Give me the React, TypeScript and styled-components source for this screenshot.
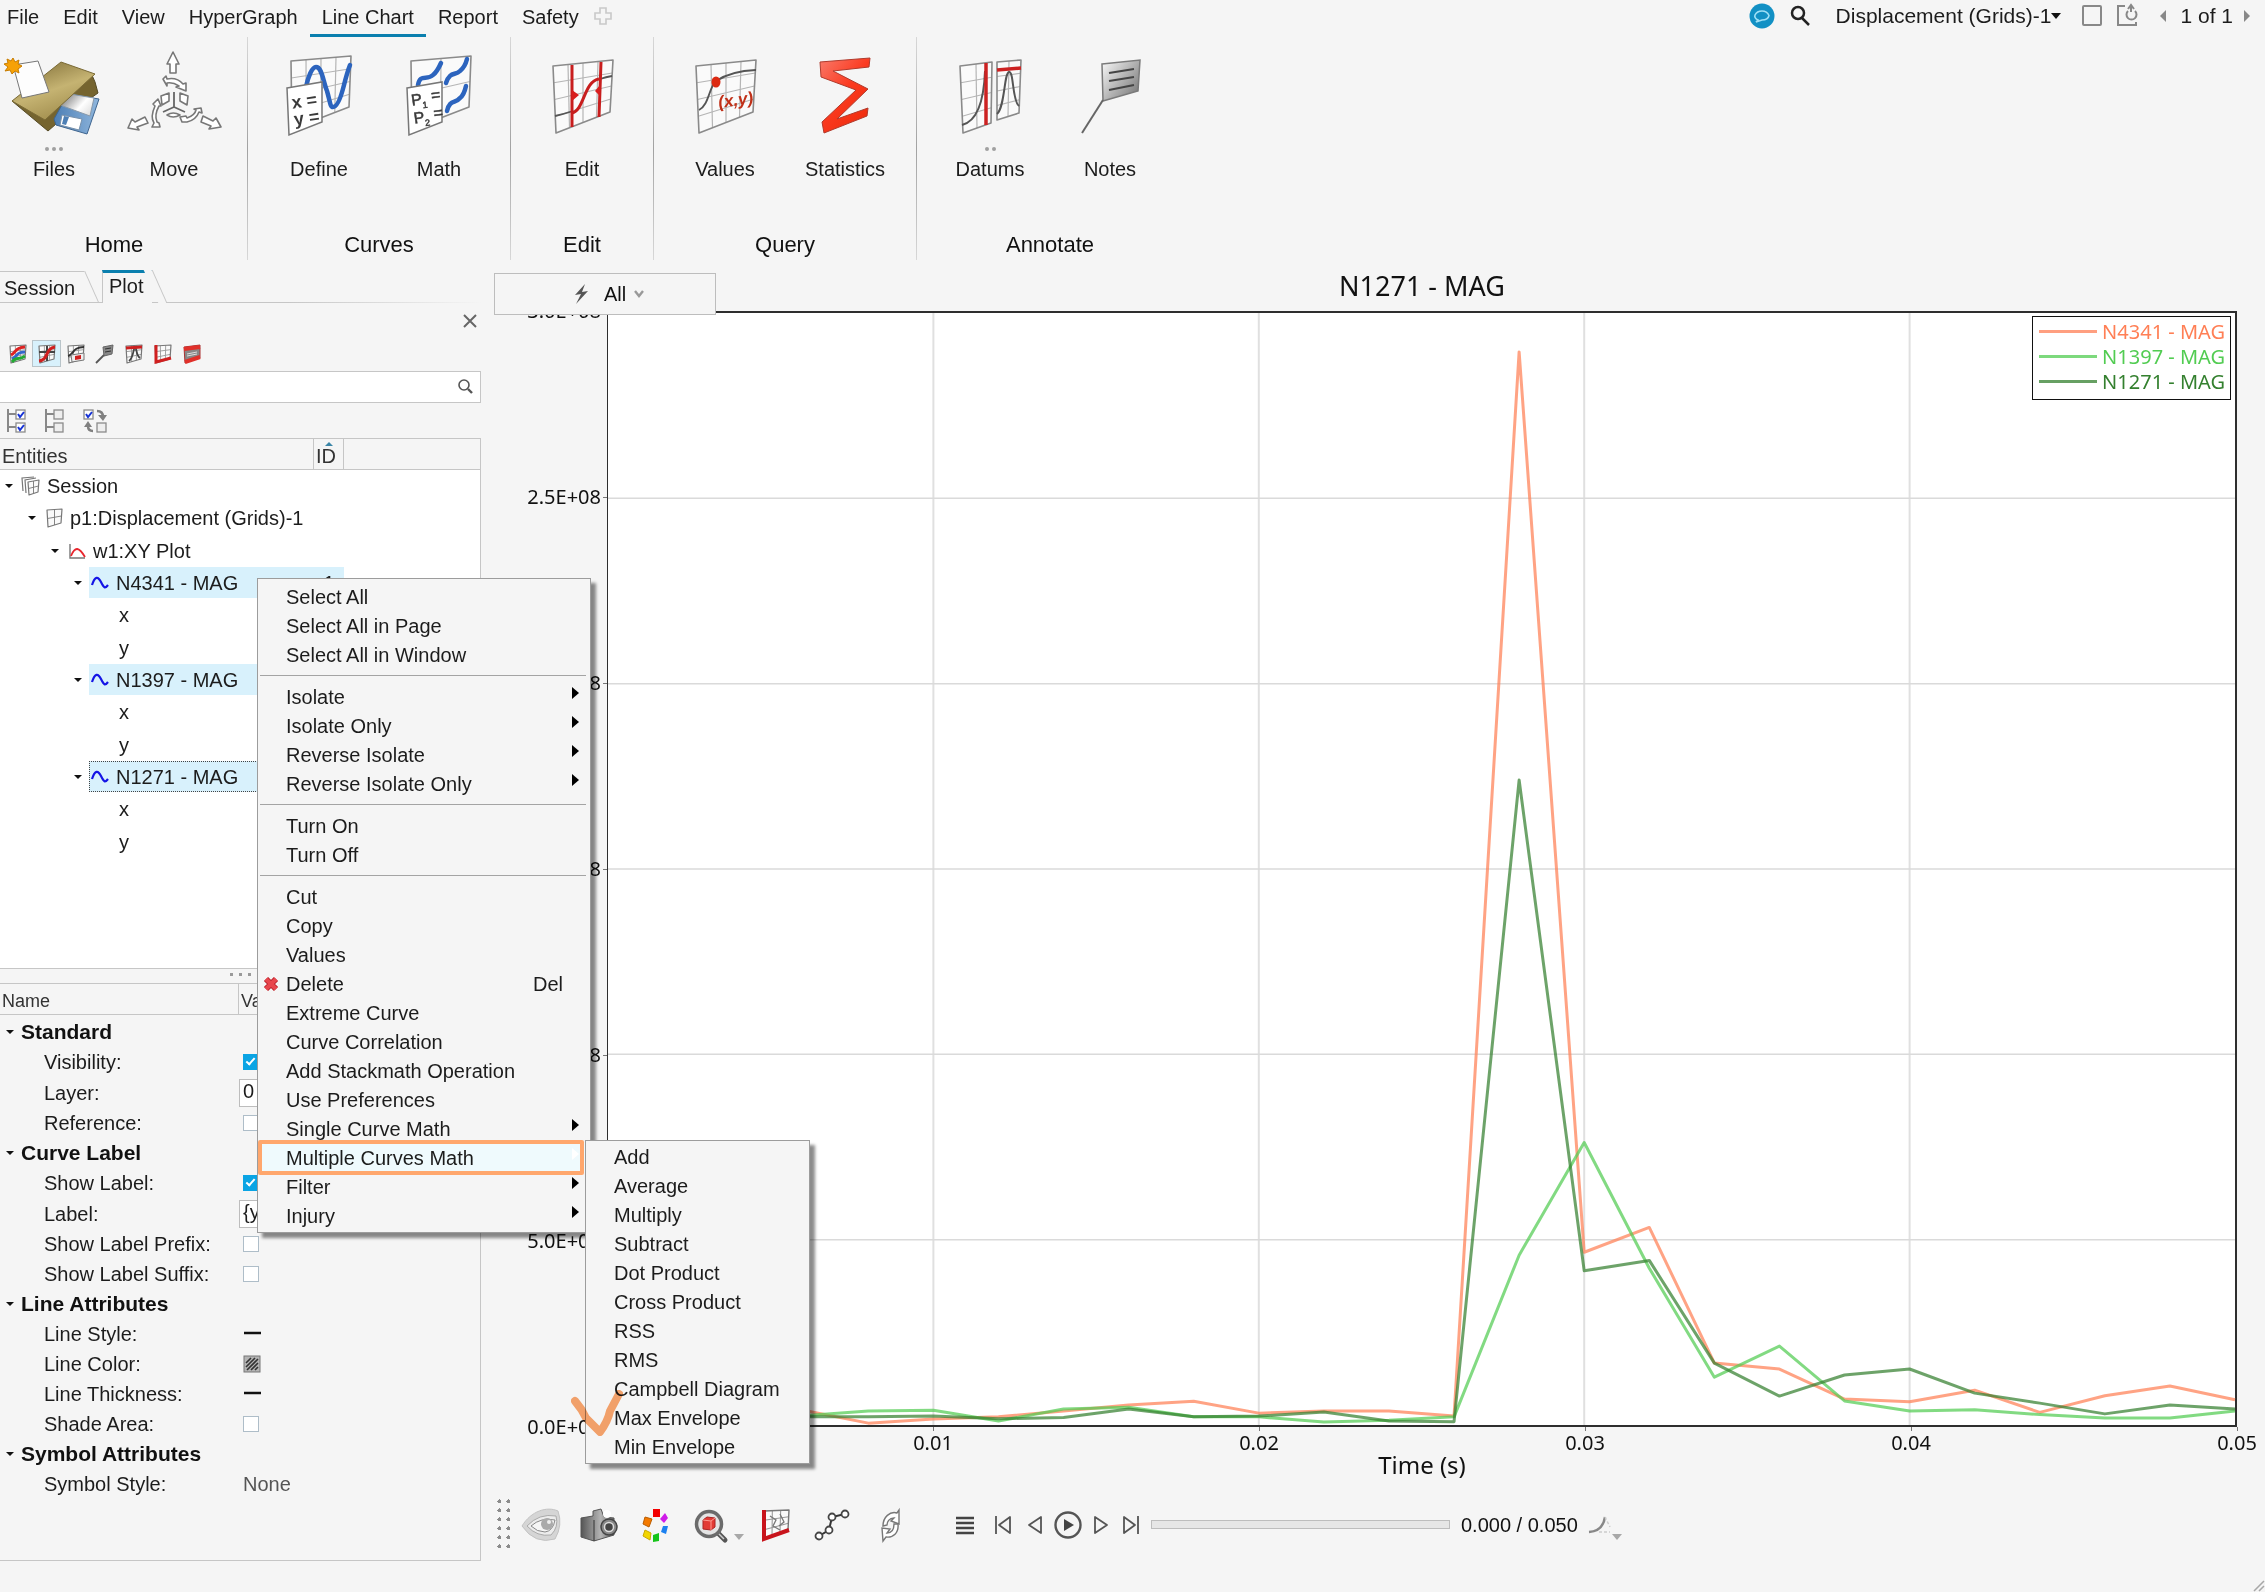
import React from "react";
import styled, { createGlobalStyle, css } from "styled-components";

/* ---------- theme values ---------- */

const ui = '"Liberation Sans", Arial, sans-serif';
const plotFont = '"Noto Sans", "Open Sans", sans-serif';
const bg = "#f5f5f5";
const line = "#c6c6c6";
const accent = "#0a7fae";
const picked = "#d8f1fc";

const GlobalStyle = createGlobalStyle`
  *, *::before, *::after { box-sizing: border-box; }
  body { margin: 0; background: ${bg}; color: #1c1c1c; font: 20px/24px ${ui}; }
  button, input { font: inherit; color: inherit; margin: 0; padding: 0; border: 0; background: none; border-radius: 0; }
  button { cursor: pointer; }
  svg { display: block; overflow: visible; flex: none; }
`;

/* ---------- drawing helpers ---------- */

type Pt = [number, number];
type Quad = [Pt, Pt, Pt, Pt];

const mix = (a: Pt, b: Pt, t: number): Pt => [a[0] + (b[0] - a[0]) * t, a[1] + (b[1] - a[1]) * t];
const pts = (list: Pt[]) => list.map((p) => p.join(",")).join(" ");

/* A sheet of squared paper in perspective; corners run clockwise from the top left. */
function Mesh({ q, n = 4, m = 4, fill = "#fafafa", stroke = "#8a8a8a", w = 1.6, inner = "#b5b5b5" }: {
  q: Quad; n?: number; m?: number; fill?: string; stroke?: string; w?: number; inner?: string;
}) {
  const out: React.ReactNode[] = [];
  for (let i = 1; i < n; i++) {
    const a = mix(q[0], q[1], i / n);
    const b = mix(q[3], q[2], i / n);
    out.push(<line key={"c" + i} x1={a[0]} y1={a[1]} x2={b[0]} y2={b[1]} stroke={inner} strokeWidth={w * 0.75} />);
  }
  for (let i = 1; i < m; i++) {
    const a = mix(q[0], q[3], i / m);
    const b = mix(q[1], q[2], i / m);
    out.push(<line key={"r" + i} x1={a[0]} y1={a[1]} x2={b[0]} y2={b[1]} stroke={inner} strokeWidth={w * 0.75} />);
  }
  return (
    <g>
      <polygon points={pts(q)} fill={fill} />
      {out}
      <polygon points={pts(q)} fill="none" stroke={stroke} strokeWidth={w} strokeLinejoin="round" />
    </g>
  );
}

const Big = ({ children }: { children: React.ReactNode }) => (
  <svg width="100" height="80" viewBox="0 0 100 80" fill="none" aria-hidden="true">{children}</svg>
);
const Small = ({ children, w = 20, h = 20 }: { children: React.ReactNode; w?: number; h?: number }) => (
  <svg width={w} height={h} viewBox={`0 0 ${w} ${h}`} fill="none" aria-hidden="true">{children}</svg>
);

/* ---------- ribbon icons ---------- */

const FilesIcon = () => (
  <Big>
    <defs>
      <linearGradient id="fold" x1="0.2" y1="0" x2="0.7" y2="1">
        <stop offset="0" stopColor="#83713a" /><stop offset="0.5" stopColor="#c5b372" /><stop offset="1" stopColor="#9c8848" />
      </linearGradient>
      <linearGradient id="disk" x1="0" y1="0" x2="1" y2="0">
        <stop offset="0" stopColor="#4d7fb5" /><stop offset="1" stopColor="#8fb6dd" />
      </linearGradient>
      <linearGradient id="shut" x1="0" y1="0.2" x2="1" y2="0.8">
        <stop offset="0" stopColor="#777" /><stop offset="0.6" stopColor="#fff" /><stop offset="1" stopColor="#ddd" />
      </linearGradient>
    </defs>
    <path d="M8 46 44 76 60 62 94 38 91 27 87 18Z" fill="#75642f" stroke="#554a24" />
    <path d="M50 64 64 39 95 44 83 79 52 70Z" fill="url(#disk)" stroke="#3f658f" strokeLinejoin="round" />
    <path d="M66 39 90 43 86 61 56 50Z" fill="url(#shut)" stroke="#8899aa" />
    <path d="M58 60 78 64 75 75 56 70Z" fill="#fff" stroke="#7790aa" />
    <path d="M60 61 65 62 62 70 58 69Z" fill="#4d7fb5" />
    <path d="M8 46 57 7 91 19 41 65Z" fill="url(#fold)" stroke="#7a6a35" strokeLinejoin="round" />
    <path d="M9 10 34 6 45 37 18 43Z" fill="#fdfdfd" stroke="#777" strokeLinejoin="round" />
    <path d="M9 3 11 7 15 5 14 9 18 11 14 14 15 18 11 16 8 19 6 15 1 16 4 12 0 9 4 8 3 4 7 6Z" fill="#f6a106" stroke="#c77c00" />
  </Big>
);

const MoveIcon = () => (
  <Big>
    <g fill="#fff" stroke="#777" strokeWidth="1.6" strokeLinejoin="round">
      <path d="M49-3 55 9H52V18H46V9H43Z" />
      <path d="M39 24 42 21 43 24Q53 22 59 29L62 28 62 36 52 32 55 31Q49 27 43 28L43 31Z" />
      <path d="M37 41 45 38 45 46 38 50ZM56 38 64 41 63 50 56 46Z" />
      <path d="M43 60Q49 56 56 60 49 64 43 60Z" />
      <path d="M4 73 8 64 11 67 21 62 24 68 13 72 15 75Z" />
      <path d="M97 72 92 63 89 66 79 61 77 67 87 71 85 74Z" />
      <path d="M34 44 29 49 31 51Q26 62 30 68L28 72 36 72 35 68 33 67Q30 60 35 51L37 51Z" />
      <path d="M56 62 62 61 63 63Q71 60 72 55L70 54 77 53 78 58 75 57Q72 65 63 67L58 67Z" />
    </g>
    <path d="M50 37V52L39 57M50 52 61 57" stroke="#666" strokeWidth="1.8" />
  </Big>
);

const cardText = { fontFamily: ui, fontWeight: 700, fill: "#3a3a3a" } as const;

const DefineIcon = () => (
  <Big>
    <Mesh q={[[22, 6], [82, 1], [80, 52], [23, 74]]} />
    <path d="M37 32C39 22 43 12 47 12C53 12 54 26 58 36C61 46 61 52 64 52C69 52 73 38 75 30Q78 18 81 10" stroke="#2c64be" strokeWidth="4.5" strokeLinecap="round" />
    <path d="M18 33 53 27 53 67 20 80Z" fill="#fff" stroke="#777" strokeWidth="1.5" />
    <g transform="rotate(-8 36 50)" fontSize="18" {...cardText}>
      <text x="23" y="52">x =</text>
      <text x="23" y="69">y =</text>
    </g>
  </Big>
);

const MathIcon = () => (
  <Big>
    <Mesh q={[[22, 6], [82, 1], [80, 52], [23, 74]]} n={2} m={2} />
    <g stroke="#2c64be" strokeWidth="4.5" strokeLinecap="round">
      <path d="M29 30C31 18 38 26 44 20Q48 17 52 8" />
      <path d="M57 28C61 16 66 21 71 16Q76 12 78 4" />
      <path d="M58 56C61 44 66 49 71 43Q75 40 77 31" />
    </g>
    <path d="M18 33 53 27 53 67 20 80Z" fill="#fff" stroke="#777" strokeWidth="1.5" />
    <g transform="rotate(-8 36 50)" {...cardText} fontWeight={400} stroke="#3a3a3a" strokeWidth="0.5">
      <text x="23" y="49" fontSize="16">P<tspan fontSize="9" dy="4">1</tspan><tspan dy="-6"> =</tspan></text>
      <text x="23" y="67" fontSize="16">P<tspan fontSize="9" dy="4">2</tspan><tspan dy="-6"> =</tspan></text>
    </g>
  </Big>
);

const sheet: Quad = [[21, 11], [81, 5], [78, 57], [24, 78]];

const EditIcon = () => (
  <Big>
    <Mesh q={sheet} />
    <path d="M23 61Q32 59 41 56M68 24Q74 22 80 21" stroke="#555" strokeWidth="1.8" />
    <path d="M40 58C52 56 52 26 67 24" stroke="#c81e1e" strokeWidth="3" />
    <path d="M40 10V72M69 7 67 62" stroke="#c81e1e" strokeWidth="3" />
    <path d="M40 35 47 40 40 46ZM68 30 63 36 68 41Z" fill="#d81e1e" />
  </Big>
);

const ValuesIcon = () => (
  <Big>
    <Mesh q={sheet} />
    <path d="M24 55C34 50 34 32 41 26Q56 16 81 15" stroke="#555" strokeWidth="1.8" />
    <ellipse cx="41" cy="27" rx="4.5" ry="5.5" fill="#dc2a12" />
    <text x="43" y="51" fontFamily={ui} fontStyle="italic" fontWeight="700" fontSize="17" fill="#c03018" transform="rotate(-8 58 44)">(x,y)</text>
  </Big>
);

const SigmaIcon = () => (
  <Big>
    <defs>
      <linearGradient id="sig" x1="0" y1="0" x2="0.8" y2="1">
        <stop offset="0" stopColor="#f97a6a" /><stop offset="0.5" stopColor="#fb3a20" /><stop offset="1" stopColor="#ee2c0c" />
      </linearGradient>
    </defs>
    <path d="M25 7 75 3 74 12 38 16 73 34 42 64 73 53 72 61 29 78 27 67 61 35 26 22Z" fill="url(#sig)" stroke="#b03a2c" strokeLinejoin="round" />
  </Big>
);

const DatumsIcon = () => (
  <Big>
    <Mesh q={[[20, 11], [52, 7], [51, 68], [23, 78]]} n={2} />
    <Mesh q={[[57, 7], [81, 5], [79, 58], [57, 65]]} n={2} />
    <path d="M22 70C38 66 44 44 45 16M57 59C65 52 64 18 69 17S72 46 79 51" stroke="#555" strokeWidth="2" />
    <path d="M46 8V70" stroke="#cc2222" strokeWidth="3.5" />
    <path d="M57 15 81 13" stroke="#cc2222" strokeWidth="3.5" />
  </Big>
);

const NotesIcon = () => (
  <Big>
    <defs>
      <linearGradient id="flag" x1="0" y1="0" x2="1" y2="0.8">
        <stop offset="0" stopColor="#fafafa" /><stop offset="1" stopColor="#7a7a7a" />
      </linearGradient>
    </defs>
    <path d="M42 9 80 5 78 36 43 46Z" fill="url(#flag)" stroke="#7a7a7a" strokeWidth="1.5" />
    <path d="M49 18 74 14M49 26 74 22M49 35 74 30" stroke="#444" strokeWidth="2" />
    <path d="M43 45 22 78" stroke="#666" strokeWidth="2" />
  </Big>
);

/* ---------- small icons ---------- */

const tiny: Quad = [[2, 2], [18, 1], [17, 15], [3, 19]];
const TinyMesh = () => <Mesh q={tiny} n={3} m={3} w={1.2} stroke="#777" inner="#999" />;

const filterIcons: { name: string; art: React.ReactNode }[] = [
  { name: "Curves", art: <><TinyMesh /><path d="M3 11C9 8 6 4 17 3" stroke="#d22" strokeWidth="3" /><path d="M4 15C10 12 8 8 17 8" stroke="#36c" strokeWidth="3" /><path d="M4 18C9 12 10 17 17 12" stroke="#2a3" strokeWidth="3" /></> },
  { name: "Plot curve", art: <><TinyMesh /><path d="M2 8H18M10 2V17" stroke="#444" strokeWidth="2" /><path d="M2 17C12 16 8 4 18 3" stroke="#d01f1f" strokeWidth="3" /></> },
  { name: "Data sources", art: <><TinyMesh /><path d="M2 12C8 11 6 3 18 3" stroke="#333" strokeWidth="2" /><path d="M5 11 18 9V16L6 18Z" fill="#eee" stroke="#777" /><path d="M9 12 15 11V15L9 16Z" fill="#d01f1f" /></> },
  { name: "Notes", art: <><path d="M8 3 18 1 17 10 9 12Z" fill="#888" stroke="#666" /><path d="M10 5 16 4M10 8 16 7" stroke="#333" /><path d="M9 11 1 19" stroke="#555" strokeWidth="1.8" /></> },
  { name: "Datums", art: <><TinyMesh /><path d="M5 17C10 13 9 4 11 4S12 12 16 14" stroke="#444" strokeWidth="1.8" /><path d="M2 4 18 3" stroke="#cc2020" strokeWidth="2.8" /></> },
  { name: "Axes", art: <><TinyMesh /><path d="M3 1V18L18 14" stroke="#d01f1f" strokeWidth="3" /></> },
  { name: "Header and footer", art: <><path d="M2 3 18 1V14L3 19Z" fill="#888" stroke="#a33" /><path d="M2 5 18 3M3 18 18 13" stroke="#e0302a" strokeWidth="4" /><path d="M5 10 15 8M5 12 15 10" stroke="#ddd" /></> },
];

const MiniBox = ({ x, y, on }: { x: number; y: number; on?: boolean }) => (
  <g>
    <rect x={x} y={y} width="9" height="9" fill={on ? "#fff" : "#eee"} stroke="#8b8b8b" strokeWidth="1.3" />
    {on && <path d={`M${x + 2} ${y + 4}l2 3 4-5`} stroke="#1733d6" strokeWidth="2" />}
  </g>
);
const CheckAllIcon = ({ on }: { on?: boolean }) => (
  <Small w={20} h={24}>
    <path d="M1 0V23M1 5H9M1 18H9" stroke="#888" strokeWidth="2" />
    <MiniBox x={9} y={1} on={on} /><MiniBox x={9} y={14} on={on} />
  </Small>
);
const InvertIcon = () => (
  <Small w={24} h={24}>
    <MiniBox x={1} y={1} on /><MiniBox x={14} y={14} />
    <path d="M14 2Q20 2 20 8M10 22Q5 22 5 17" stroke="#808080" strokeWidth="2.5" />
    <path d="M15 6H24L20 12ZM1 18H9L5 12Z" fill="#808080" />
  </Small>
);

const SessionIcon = () => (
  <Small>
    <path d="M3 15 2 2 14 1M6 17 5 4 16 2" stroke="#777" strokeWidth="1.2" />
    <Mesh q={[[8, 6], [19, 4], [18, 16], [9, 19]]} n={2} m={2} w={1.2} stroke="#777" inner="#777" />
  </Small>
);
const PageIcon = () => <Small><Mesh q={[[4, 2], [19, 1], [18, 15], [5, 19]]} n={2} m={2} w={1.2} stroke="#777" inner="#777" /></Small>;
const WindowIcon = () => (
  <Small><path d="M4 3V17H19" stroke="#777" strokeWidth="1.4" /><path d="M5 15C9 5 13 6 19 16" stroke="#e8262e" strokeWidth="1.8" /></Small>
);
const CurveIcon = () => <Small><path d="M3 12C6 3 9 3 12 9S16 16 19 12" stroke="#1414e6" strokeWidth="2.2" /></Small>;

const SearchIcon = ({ color = "#222", w = 2.5 }: { color?: string; w?: number }) => (
  <Small w={22} h={22}><circle cx="9" cy="8" r="6" stroke={color} strokeWidth={w} /><path d="M13 13 20 20" stroke={color} strokeWidth={w} /></Small>
);

/* ---------- page frame ---------- */

const Page = styled.div`
  position: relative;
  min-height: 100vh;
  display: flex;
  flex-direction: column;
  overflow: hidden;
`;

const MenuBar = styled.header`
  display: flex;
  align-items: flex-start;
  justify-content: space-between;
  height: 37px;
`;
const MenuNav = styled.nav`
  display: flex;
  align-items: flex-start;
`;
const MenuButton = styled.button<{ $current?: boolean }>`
  height: 37px;
  padding: 5px 12px 5px;
  line-height: 24px;
  border-bottom: 3px solid ${(p) => (p.$current ? accent : "transparent")};
  &:first-child { padding-left: 7px; }
`;
const IconButton = styled.button<{ $w?: number; $h?: number }>`
  display: flex;
  align-items: center;
  justify-content: center;
  flex: none;
  width: ${(p) => p.$w ?? 28}px;
  height: ${(p) => p.$h ?? 32}px;
`;
const PageTools = styled.div`
  display: flex;
  align-items: center;
  height: 32px;
  padding-right: 4px;
  font-size: 21px;
`;
const PageName = styled.button`
  display: flex;
  align-items: center;
  margin: 0 13px 0 17px;
`;

/* ---------- ribbon ---------- */

const Ribbon = styled.section`
  display: flex;
  height: 223px;
`;
const Group = styled.div`
  display: flex;
  flex-direction: column;
  justify-content: space-between;
  box-sizing: content-box;
  padding: 18px 11px 3px;
  border-right: 1px solid #b4b4b4;
  border-image: linear-gradient(#d8d8d8, #a2a2a2 50%, #d8d8d8) 1;
  &:first-child { margin-left: -17px; padding-right: 13px; }
  &:last-child { border-right: 0; padding-left: 13px; }
`;
const GroupTools = styled.div`
  display: flex;
`;
const GroupName = styled.h2`
  margin: 0;
  text-align: center;
  font-size: 22px;
  line-height: 24px;
  font-weight: 400;
  color: #111;
`;
const Tool = styled.button`
  width: 120px;
  display: flex;
  flex-direction: column;
  align-items: center;
`;
const Dots = styled.span`
  display: flex;
  gap: 3px;
  align-items: center;
  height: 22px;
  padding-top: 6px;
  i { width: 4px; height: 4px; border-radius: 2px; background: #a0a0a0; }
`;

const groups = [
  { name: "Home", tools: [["Files", FilesIcon, 3], ["Move", MoveIcon, 0]] },
  { name: "Curves", tools: [["Define", DefineIcon, 0], ["Math", MathIcon, 0]] },
  { name: "Edit", tools: [["Edit", EditIcon, 0]] },
  { name: "Query", tools: [["Values", ValuesIcon, 0], ["Statistics", SigmaIcon, 0]] },
  { name: "Annotate", tools: [["Datums", DatumsIcon, 2], ["Notes", NotesIcon, 0]] },
] as { name: string; tools: [string, React.FC, number][] }[];

/* ---------- side panel ---------- */

const Main = styled.main`
  flex: 1;
  display: grid;
  grid-template-columns: 481px minmax(0, 1fr);
`;
const Side = styled.aside`
  display: flex;
  flex-direction: column;
  min-width: 0;
  padding-top: 10px;
`;
const Tabs = styled.div`
  display: flex;
  height: 33px;
  border-bottom: 1px solid ${line};
  border-image: linear-gradient(90deg, ${line} 60%, transparent) 1;
`;
const Tab = styled.button<{ $on?: boolean }>`
  position: relative;
  display: flex;
  justify-content: flex-start;
  align-items: center;
  width: ${(p) => (p.$on ? 50 : 84)}px;
  margin-right: 18px;
  margin-bottom: -1px;
  padding: ${(p) => (p.$on ? "0 0 4px 6px" : "1px 0 0 4px")};
  border-top: ${(p) => (p.$on ? `3px solid ${accent}` : `1px solid ${line}`)};
  border-left: ${(p) => (p.$on ? `1px solid ${line}` : 0)};
  background: ${bg};
  ${(p) => !p.$on && css`margin-top: 1px; border-bottom: 1px solid ${line};`}
  &::after {
    content: "";
    position: absolute;
    top: ${(p) => (p.$on ? "-3px" : "-1px")};
    bottom: 0;
    right: -8px;
    width: 16px;
    border-right: 1px solid ${line};
    transform: skewX(24deg);
    background: linear-gradient(${bg}, ${bg}) right bottom / 8px ${(p) => (p.$on ? "100%" : "0")} no-repeat;
  }
`;
const CloseRow = styled.div`
  display: flex;
  justify-content: flex-end;
  height: 37px;
`;
const FilterBar = styled.div`
  display: flex;
  height: 31px;
  padding-left: 3px;
`;
const FilterButton = styled.button<{ $on?: boolean }>`
  display: flex;
  align-items: center;
  justify-content: center;
  width: 29px;
  height: 27px;
  border: 1px solid ${(p) => (p.$on ? "#b9c4c9" : "transparent")};
  background: ${(p) => (p.$on ? picked : "none")};
`;
const SearchBox = styled.label`
  display: flex;
  align-items: center;
  height: 32px;
  padding-right: 5px;
  border: 1px solid ${line};
  border-left: 0;
  background: #fff;
  input { flex: 1; min-width: 0; height: 28px; padding-left: 4px; outline: none; }
`;
const CheckBar = styled.div`
  display: flex;
  align-items: center;
  gap: 18px;
  height: 35px;
  padding-left: 7px;
`;
const Framed = styled.div`
  border-right: 1px solid ${line};
`;
const TreeFrame = styled(Framed)`
  height: 531px;
  border-top: 1px solid ${line};
  border-bottom: 1px solid ${line};
  background: #fff;
`;
const Table = styled.table`
  width: 100%;
  table-layout: fixed;
  border-spacing: 0;
  td, th { padding: 0; text-align: left; font-weight: 400; white-space: nowrap; }
`;
const HeadCell = styled.th<{ $h: number; $size?: number }>`
  position: relative;
  height: ${(p) => p.$h}px;
  background: ${bg};
  border-bottom: 1px solid ${line};
  border-right: 1px solid ${line};
  font-size: ${(p) => p.$size ?? 20}px;
  color: #333;
  &&:not(:empty) { padding: 4px 0 0 2px; }
  &:last-child { border-right: 0; }
`;
const SortMark = styled.span`
  position: absolute;
  top: 3px;
  left: 11px;
  border: 4px solid transparent;
  border-top: 0;
  border-bottom-color: #3b86a8;
`;
const TreeRow = styled.tr<{ $h: number }>`
  height: ${(p) => p.$h}px;
`;
const Branch = styled.div<{ $level: number }>`
  display: flex;
  align-items: center;
  padding-left: ${(p) => p.$level * 23}px;
`;
const Twisty = styled.button`
  flex: none;
  width: 20px;
  height: 24px;
  display: flex;
  align-items: center;
  justify-content: center;
  padding-right: 2px;
  &::before {
    content: "";
    border: 4px solid transparent;
    border-top: 4px solid #111;
    border-bottom: 0;
  }
`;
const NodeLabel = styled.span<{ $h: number; $on?: boolean; $focus?: boolean; $leaf?: boolean }>`
  flex: 1;
  display: flex;
  align-items: center;
  gap: 7px;
  height: ${(p) => p.$h}px;
  padding-left: ${(p) => (p.$leaf ? 50 : 0)}px;
  background: ${(p) => (p.$on ? picked : "none")};
  outline: ${(p) => (p.$focus ? "1px dotted #444" : "none")};
  outline-offset: -1px;
`;
const IdCell = styled.td<{ $on?: boolean }>`
  background: ${(p) => (p.$on ? picked : "none")};
  && { text-align: center; }
`;

const tree: { text: string; level: number; icon?: React.ReactNode; h: number; on?: boolean; focus?: boolean; id?: string }[] = [
  { text: "Session", level: 0, icon: <SessionIcon />, h: 32 },
  { text: "p1:Displacement (Grids)-1", level: 1, icon: <PageIcon />, h: 32 },
  { text: "w1:XY Plot", level: 2, icon: <WindowIcon />, h: 33 },
  ...[["N4341 - MAG", "1"], ["N1397 - MAG", ""], ["N1271 - MAG", ""]].flatMap(([text, id], i) => [
    { text, level: 3, icon: <CurveIcon />, h: 31, on: true, focus: i === 2, id },
    { text: "x", level: 3, h: 33 },
    { text: "y", level: 3, h: 33 },
  ]),
];

const Splitter = styled(Framed)`
  display: flex;
  justify-content: center;
  align-items: flex-start;
  gap: 6px;
  height: 15px;
  padding-top: 4px;
  border-bottom: 1px solid ${line};
  i { width: 3px; height: 3px; background: #9a9a9a; }
`;
const PropsFrame = styled(Framed)`
  flex: 1;
  border-bottom: 1px solid ${line};
`;
const PropRow = styled.tr<{ $h: number }>`
  height: ${(p) => p.$h}px;
`;
const PropName = styled.div<{ $head?: boolean }>`
  display: flex;
  align-items: center;
  padding-left: ${(p) => (p.$head ? 1 : 44)}px;
  font-weight: ${(p) => (p.$head ? 700 : 400)};
  ${(p) => p.$head && css`font-size: 21px; color: #111;`}
`;
const Field = styled.input`
  display: block;
  width: 100%;
  height: 28px;
  padding: 0 4px 2px 3px;
  border: 1px solid #bdbdbd;
  background: #fff;
`;
const Tick = styled.input`
  appearance: none;
  display: block;
  width: 16px;
  height: 16px;
  margin-left: 4px;
  border: 1px solid #aebdc8;
  background: #fff;
  &:checked {
    border-color: #0aa4e4;
    background: #0aa4e4;
    position: relative;
  }
  &:checked::after {
    content: "";
    position: absolute;
    left: 4px;
    top: 1px;
    width: 5px;
    height: 9px;
    border: solid #fff;
    border-width: 0 2px 2px 0;
    transform: rotate(42deg);
  }
`;
const ValueButton = styled.button`
  display: flex;
  align-items: center;
  height: 24px;
  padding-left: 4px;
  color: #555;
`;

type Prop = [string, ("head" | "check" | "uncheck" | "text" | "line" | "hatch" | "plain"), string?];
const properties: Prop[] = [
  ["Standard", "head"], ["Visibility:", "check"], ["Layer:", "text", "0"], ["Reference:", "uncheck"],
  ["Curve Label", "head"], ["Show Label:", "check"], ["Label:", "text", "{y}"], ["Show Label Prefix:", "uncheck"], ["Show Label Suffix:", "uncheck"],
  ["Line Attributes", "head"], ["Line Style:", "line"], ["Line Color:", "hatch"], ["Line Thickness:", "line"], ["Shade Area:", "uncheck"],
  ["Symbol Attributes", "head"], ["Symbol Style:", "plain", "None"],
];

function PropValue({ id, kind, value }: { id: string; kind: Prop[1]; value?: string }) {
  if (kind === "check" || kind === "uncheck") return <Tick id={id} type="checkbox" defaultChecked={kind === "check"} />;
  if (kind === "text") return <Field id={id} defaultValue={value} />;
  if (kind === "line") return <ValueButton id={id}><Small w={18} h={18}><path d="M1 8H18" stroke="#111" strokeWidth="2.5" /></Small></ValueButton>;
  if (kind === "hatch")
    return (
      <ValueButton id={id}>
        <Small w={18} h={18}>
          <rect x="1" y="1" width="16" height="16" fill="#b4b4b4" stroke="#777" />
          <path d="M3 8 8 3M3 12 12 3M4 15 15 4M8 15 15 8M12 15 15 12" stroke="#333" strokeWidth="1.6" />
        </Small>
      </ValueButton>
    );
  return <ValueButton id={id}>{value}</ValueButton>;
}

function SidePanel() {
  return (
    <Side>
      <Tabs>
        <Tab>Session</Tab>
        <Tab $on>Plot</Tab>
      </Tabs>
      <CloseRow>
        <IconButton aria-label="Close panel" $w={22} $h={36}>
          <Small w={14} h={14}><path d="M1 1 13 13M13 1 1 13" stroke="#666" strokeWidth="2" /></Small>
        </IconButton>
      </CloseRow>
      <FilterBar>
        {filterIcons.map((f, i) => (
          <FilterButton key={f.name} aria-label={f.name} $on={i === 1}><Small>{f.art}</Small></FilterButton>
        ))}
      </FilterBar>
      <SearchBox>
        <input type="text" aria-label="Search entities" />
        <Small w={18} h={18}><circle cx="7" cy="7" r="5" stroke="#555" strokeWidth="1.6" /><path d="M11 11 15 15" stroke="#555" strokeWidth="2.4" /></Small>
      </SearchBox>
      <CheckBar>
        <IconButton aria-label="Check all" $w={20}><CheckAllIcon on /></IconButton>
        <IconButton aria-label="Uncheck all" $w={20}><CheckAllIcon /></IconButton>
        <IconButton aria-label="Reverse" $w={24}><InvertIcon /></IconButton>
      </CheckBar>
      <TreeFrame>
        <Table>
          <colgroup><col width="314" /><col width="30" /><col /></colgroup>
          <thead>
            <tr><HeadCell $h={31}>Entities</HeadCell><HeadCell $h={31}>ID<SortMark /></HeadCell><HeadCell $h={31} /></tr>
          </thead>
          <tbody>
            {tree.map((n, i) => (
              <TreeRow key={i} $h={n.h}>
                <td>
                  <Branch $level={n.level}>
                    {n.icon && <Twisty aria-label={"Collapse " + n.text} />}
                    <NodeLabel $h={n.h} $on={n.on} $focus={n.focus} $leaf={!n.icon}>{n.icon}{n.text}</NodeLabel>
                  </Branch>
                </td>
                <IdCell $on={n.on}>{n.id}</IdCell>
                <td />
              </TreeRow>
            ))}
          </tbody>
        </Table>
      </TreeFrame>
      <Splitter><i /><i /><i /></Splitter>
      <PropsFrame>
        <Table>
          <colgroup><col width="239" /><col /></colgroup>
          <thead><tr><HeadCell $h={31} $size={18}>Name</HeadCell><HeadCell $h={31} $size={18}>Value</HeadCell></tr></thead>
          <tbody>
            <PropRow $h={2}><td /><td /></PropRow>
            {properties.map(([name, kind, value], i) => (
              <PropRow key={name} $h={kind === "text" ? 31 : 30}>
                <td>
                  <PropName $head={kind === "head"}>
                    {kind === "head" ? <><Twisty aria-label={"Collapse " + name} />{name}</> : <label htmlFor={"prop" + i}>{name}</label>}
                  </PropName>
                </td>
                <td>{kind !== "head" && <PropValue id={"prop" + i} kind={kind} value={value} />}</td>
              </PropRow>
            ))}
          </tbody>
        </Table>
      </PropsFrame>
    </Side>
  );
}

/* ---------- chart ---------- */

const Work = styled.section`
  position: relative;
  display: grid;
  min-width: 0;
  grid-template-columns: 126px minmax(0, 1fr) 28px;
  grid-template-rows: 51px minmax(400px, 1fr) 28px 20px 86px;
  font-family: ${plotFont};
  color: #111;
`;
const ChartTitle = styled.h1`
  grid-column: 2;
  margin: 0;
  text-align: center;
  font-size: 27px;
  line-height: 51px;
  font-weight: 400;
`;
const YAxis = styled.div`
  grid-column: 1;
  grid-row: 2;
  display: flex;
  flex-direction: column-reverse;
  justify-content: space-between;
`;
const YLabel = styled.span`
  display: flex;
  align-items: center;
  justify-content: flex-end;
  gap: 2px;
  height: 0;
  &::after { content: ""; width: 4px; height: 1px; background: #777; }
`;
const Plot = styled.div`
  grid-column: 2;
  grid-row: 2;
  position: relative;
  display: grid;
  background: #fff;
  border: 2px solid #2e2e2e;
  border-left-width: 1px;
`;
const Canvas = styled.svg`
  width: 100%;
  height: 100%;
  contain: size;
`;
const XAxis = styled.div`
  grid-column: 2;
  grid-row: 3;
  display: flex;
  justify-content: space-between;
`;
const XLabel = styled.span`
  display: flex;
  flex-direction: column;
  align-items: center;
  width: 0;
  line-height: 24px;
  &::before { content: ""; width: 1px; height: 4px; background: #777; }
`;
const XTitle = styled.div`
  grid-column: 2;
  grid-row: 4;
  text-align: center;
  font-size: 24px;
  line-height: 20px;
`;
const Legend = styled.ul`
  position: absolute;
  top: 3px;
  right: 4px;
  margin: 0;
  padding: 2px 5px 5px 6px;
  list-style: none;
  border: 1px solid #111;
  background: #fff;
`;
const LegendItem = styled.li<{ $color: string }>`
  display: flex;
  align-items: center;
  gap: 5px;
  line-height: 25px;
  color: ${(p) => p.$color};
  &::before { content: ""; width: 58px; height: 3px; background: currentColor; opacity: 0.75; }
`;

/* Values in millions, one sample every 0.002 s. */
const series = [
  { name: "N4341 - MAG", color: "#ff7f55", data: [0, 1, 2, 4, 0.5, 1.6, 2.2, 3.8, 5.4, 6.4, 3.2, 3.8, 3.8, 2.4, 289.5, 46.6, 53.3, 16.7, 15.1, 7, 6.3, 9.4, 3.4, 7.9, 10.5, 6.8] },
  { name: "N1397 - MAG", color: "#52cc52", data: [0, 1, 2, 2.5, 3.8, 4, 1.1, 4.3, 4.8, 2.2, 2.2, 0.8, 1.3, 2.2, 45.8, 76.2, 42.3, 12.9, 21.3, 6.5, 3.8, 4.1, 2.8, 1.9, 1.9, 3.8] },
  { name: "N1271 - MAG", color: "#34802f", data: [0, 1, 2, 2.2, 2.2, 2.4, 1.7, 2, 4.3, 2.2, 2.4, 3.5, 1.1, 0.9, 174, 41.6, 44.4, 16.7, 7.8, 13.5, 15.1, 8.6, 5.9, 3, 5.4, 4.3] },
];
const vx = { vectorEffect: "non-scaling-stroke" } as const;

/* ---------- bottom bar ---------- */

const BottomBar = styled.div`
  grid-column: 1 / -1;
  grid-row: 5;
  display: flex;
  align-items: center;
  padding: 13px 0 0 14px;
  font-family: ${ui};
`;
const Grip = styled.span`
  width: 16px;
  height: 56px;
  margin-right: 10px;
  background: radial-gradient(circle, #8c8c8c 2px, transparent 2px) 0 0 / 9px 9px;
`;
const ViewTools = styled.div`
  display: flex;
  align-items: center;
  margin-right: 21px;
`;
const Caret = styled.span<{ $dark?: boolean }>`
  align-self: center;
  border: 5px solid transparent;
  border-top: 6px solid ${(p) => (p.$dark ? "#111" : "#a8a8a8")};
  border-bottom: 0;
`;
const LowCaret = styled(Caret)`
  margin-top: 24px;
`;
const Slider = styled.input`
  appearance: none;
  width: 299px;
  height: 9px;
  margin: 0 11px 0 4px;
  border: 1px solid #bdbdbd;
  background: #e6e6e6;
  &::-webkit-slider-thumb { appearance: none; width: 0; height: 0; }
`;
const TimeText = styled.output`
  margin-right: 10px;
`;

const stroke = { stroke: "#555", strokeWidth: 1.8, strokeLinejoin: "round" } as const;

const EyeIcon = () => (
  <Small w={40} h={36}>
    <path d="M1 19C10 4 26-1 37 4Q42 18 34 32Q14 38 1 19Z" fill="#d5d5d5" stroke="#c2c2c2" />
    <path d="M6 19Q18 6 35 9Q38 20 30 28Q16 30 6 19Z" fill="#ececec" stroke="#aaa" />
    <path d="M10 19Q20 10 34 13Q32 24 24 25Q16 25 10 19Z" fill="#f5f5f5" stroke="#888" />
    <circle cx="26" cy="17" r="6" fill="#aaa" /><circle cx="28" cy="15" r="2" fill="#eee" />
  </Small>
);
const CameraIcon = () => (
  <Small w={38} h={34}>
    <defs><linearGradient id="cam"><stop offset="0" stopColor="#555" /><stop offset="0.6" stopColor="#b5b5b5" /><stop offset="1" stopColor="#666" /></linearGradient></defs>
    <path d="M1 10 13 8 13 3 21 1 24 9 34 10V27L14 33 1 29Z" fill="url(#cam)" stroke="#555" />
    <path d="M14 12V33" stroke="#333" />
    <circle cx="29" cy="19" r="8" fill="#888" stroke="#444" strokeWidth="1.5" />
    <circle cx="29" cy="19" r="4.5" fill="#444" stroke="#ddd" strokeWidth="1.5" />
    <circle cx="27" cy="6" r="4" fill="#fff" />
  </Small>
);
const WheelIcon = () => (
  <Small w={26} h={34}>
    <path d="M10 1H17V9H10Z" fill="#f30000" /><path d="M22 5 25 10 21 15 17 11Z" fill="#cf1be8" />
    <path d="M20 18 25 18 23 26 18 24Z" fill="#1b80f0" /><path d="M10 27 16 25V33L10 34Z" fill="#16c41a" />
    <path d="M2 22 8 25 7 32 0 28Z" fill="#f2d500" stroke="#c9a800" /><path d="M2 9 9 11 6 19 0 16Z" fill="#f47a00" stroke="#b95d00" />
  </Small>
);
const ZoomCubeIcon = () => (
  <Small w={32} h={34}>
    <path d="M22 24 30 32" stroke="#555" strokeWidth="5" strokeLinecap="round" /><path d="M23 25 29 31" stroke="#ccc" strokeWidth="1.5" />
    <circle cx="14" cy="16" r="12.5" fill="#e4e4e4" stroke="#6b6b6b" strokeWidth="3.5" />
    <path d="M8 12 12 9 20 10V19L16 22 8 21Z" fill="#e23a34" stroke="#a22" /><path d="M8 12 16 13 20 10M16 13V22" stroke="#ff9a90" />
  </Small>
);
const RedPlotIcon = () => (
  <Small w={30} h={34}>
    <Mesh q={[[3, 3], [28, 2], [27, 22], [3, 31]]} n={3} m={3} w={1.4} stroke="#777" inner="#999" />
    <path d="M9 8 15 12 12 18 19 22M19 6 23 14 18 18" stroke="#777" strokeWidth="1.3" />
    <path d="M3 2V31L28 22" stroke="#c8141c" strokeWidth="4" />
  </Small>
);
const PolylineIcon = () => (
  <Small w={36} h={34}>
    <path d="M5 28 15 22 18 9 31 6" stroke="#333" strokeWidth="2" />
    {[[5, 28], [15, 22], [18, 9], [31, 6]].map(([x, y]) => <circle key={x} cx={x} cy={y} r="3.5" fill="#fff" stroke="#444" strokeWidth="1.8" />)}
  </Small>
);
const RotateIcon = () => (
  <Small w={24} h={34}>
    <path d="M4 18C4 9 11 3 18 5L20 2V16L12 13 15 10C10 10 8 14 8 17Z" fill="#fff" stroke="#777" strokeWidth="1.4" />
    <path d="M19 16C20 25 14 30 7 29L4 33 3 20 11 21 8 25C13 25 15 21 15 16Z" fill="#fff" stroke="#777" strokeWidth="1.4" />
  </Small>
);

const viewTools = [
  { name: "Visibility", w: 39, art: <EyeIcon />, gap: 20 },
  { name: "Capture", w: 38, art: <CameraIcon />, gap: 25 },
  { name: "Colors", w: 26, art: <WheelIcon />, gap: 25 },
  { name: "Fit view", w: 34, art: <ZoomCubeIcon />, gap: 6, caret: true },
  { name: "Plot grid", w: 30, art: <RedPlotIcon />, gap: 23 },
  { name: "Trace", w: 36, art: <PolylineIcon />, gap: 29 },
  { name: "Refresh", w: 24, art: <RotateIcon />, gap: 21 },
];
const playTools = [
  { name: "Playback menu", w: 40, art: <Small w={20} h={20}><path d="M1 3H19M1 8H19M1 13H19M1 18H19" stroke="#444" strokeWidth="2.4" /></Small> },
  { name: "First frame", w: 36, art: <Small w={18} h={20}><path d="M2 1V19M16 2V18L5 10Z" {...stroke} /></Small> },
  { name: "Previous frame", w: 28, art: <Small w={16} h={20}><path d="M14 2V18L2 10Z" {...stroke} /></Small> },
  { name: "Play", w: 38, art: <Small w={28} h={28}><circle cx="14" cy="14" r="12.5" stroke="#555" strokeWidth="2.4" /><path d="M10 8V20L20 14Z" fill="#444" /></Small> },
  { name: "Next frame", w: 28, art: <Small w={16} h={20}><path d="M2 2V18L14 10Z" {...stroke} /></Small> },
  { name: "Last frame", w: 32, art: <Small w={18} h={20}><path d="M16 1V19M2 2V18L13 10Z" {...stroke} /></Small> },
];

const ToolSlot = styled.button<{ $w: number; $gap: number }>`
  display: flex;
  align-items: center;
  justify-content: center;
  width: ${(p) => p.$w}px;
  height: 40px;
  margin-right: ${(p) => p.$gap}px;
`;

const AllMenu = styled.button`
  position: absolute;
  top: 13px;
  left: 13px;
  display: flex;
  align-items: center;
  justify-content: center;
  gap: 8px;
  width: 222px;
  height: 42px;
  padding-left: 7px;
  border: 1px solid #bdbdbd;
  background: ${bg};
  font-family: ${ui};
  span { padding-left: 7px; }
`;

function Workspace() {
  const step = 1000 / 5;
  return (
    <Work>
      <ChartTitle>N1271 - MAG</ChartTitle>
      <YAxis>
        {["0.0E+00", "5.0E+07", "1.0E+08", "1.5E+08", "2.0E+08", "2.5E+08", "3.0E+08"].map((t) => <YLabel key={t}>{t}</YLabel>)}
      </YAxis>
      <Plot>
        <Canvas viewBox="0 0 1000 300" preserveAspectRatio="none" fill="none" role="img" aria-label="Magnitude against time">
          {[1, 2, 3, 4].map((i) => <line key={i} x1={i * step} x2={i * step} y1="0" y2="300" stroke="#e0e0e0" strokeWidth="2" {...vx} />)}
          {[1, 2, 3, 4, 5].map((i) => <line key={i} x1="0" x2="1000" y1={i * 50} y2={i * 50} stroke="#dadada" strokeWidth="1.5" {...vx} />)}
          {series.map((s) => (
            <polyline key={s.name} points={s.data.map((v, i) => `${i * 40},${300 - v}`).join(" ")} stroke={s.color} strokeOpacity="0.72" strokeWidth="3" strokeLinejoin="round" {...vx} />
          ))}
        </Canvas>
        <Legend>
          {series.map((s) => <LegendItem key={s.name} $color={s.color}>{s.name}</LegendItem>)}
        </Legend>
      </Plot>
      <XAxis>
        {["0", "0.01", "0.02", "0.03", "0.04", "0.05"].map((t) => <XLabel key={t}>{t}</XLabel>)}
      </XAxis>
      <XTitle>Time (s)</XTitle>
      <BottomBar>
        <Grip />
        <ViewTools>
          {viewTools.map((t) => (
            <React.Fragment key={t.name}>
              <ToolSlot aria-label={t.name} $w={t.w} $gap={t.gap}>{t.art}</ToolSlot>
              {t.caret && <ToolSlot aria-label="Fit options" $w={10} $gap={17}><LowCaret /></ToolSlot>}
            </React.Fragment>
          ))}
        </ViewTools>
        {playTools.map((t) => <IconButton key={t.name} aria-label={t.name} $w={t.w}>{t.art}</IconButton>)}
        <Slider type="range" min="0" max="50" defaultValue="0" aria-label="Time" />
        <TimeText>0.000 / 0.050</TimeText>
        <IconButton aria-label="Animation mode" $w={24}>
          <Small w={24} h={20}><path d="M1 17Q15 16 17 2" stroke="#888" strokeWidth="2.4" /><path d="M17 2 22 12M11 17H22" stroke="#ccc" strokeWidth="1.5" strokeDasharray="3 2" /></Small>
        </IconButton>
        <LowCaret />
      </BottomBar>
      <AllMenu>
        <Small w={16} h={22}><path d="M12 1 2 12 8 11 3 21 15 8 9 9Z" fill="#555" /></Small>
        <span>All</span>
        <Small w={10} h={10}><path d="M1 2 5 7 9 2" stroke="#999" strokeWidth="2.4" /></Small>
      </AllMenu>
    </Work>
  );
}

/* ---------- context menus ---------- */

const popup = css`
  position: absolute;
  margin: 0;
  list-style: none;
  border: 1px solid #9c9c9c;
  background: ${bg};
  box-shadow: 5px 5px 3px rgba(0, 0, 0, 0.45);
`;
const Context = styled.ul`
  ${popup}
  top: 578px;
  left: 257px;
  width: 334px;
  padding: 3px 0 2px;
`;
const Sub = styled.ul`
  ${popup}
  top: 561px;
  left: 327px;
  width: 225px;
  padding: 1px 0 2px;
`;
const Entry = styled.button<{ $open?: boolean }>`
  position: relative;
  display: flex;
  align-items: center;
  justify-content: space-between;
  width: 100%;
  height: 29px;
  padding: 0 27px 0 28px;
  background: ${(p) => (p.$open ? "#effafd" : "none")};
`;
const Arrow = styled.span<{ $light?: boolean }>`
  position: absolute;
  right: 11px;
  top: 5px;
  border: 6px solid transparent;
  border-left: 7px solid ${(p) => (p.$light ? "#fff" : "#000")};
  border-right: 0;
`;
const Divider = styled.li`
  height: 13px;
  padding: 6px 4px 0 2px;
  &::before { content: ""; display: block; height: 1px; background: #a4a4a4; }
`;
const Ring = styled.span`
  position: absolute;
  inset: -3px 6px -3px 0;
  border: 4px solid #ffa76d;
  border-radius: 2px;
`;
const Cross = styled.span`
  position: absolute;
  left: 5px;
`;
const HandTick = styled.svg`
  position: absolute;
  left: -18px;
  top: 248px;
  mix-blend-mode: multiply;
  pointer-events: none;
`;

const contextItems = [
  "Select All", "Select All in Page", "Select All in Window", "-",
  "Isolate>", "Isolate Only>", "Reverse Isolate>", "Reverse Isolate Only>", "-",
  "Turn On", "Turn Off", "-",
  "Cut", "Copy", "Values", "Delete", "Extreme Curve", "Curve Correlation", "Add Stackmath Operation", "Use Preferences",
  "Single Curve Math>", "Multiple Curves Math>", "Filter>", "Injury>",
];
const subItems = ["Add", "Average", "Multiply", "Subtract", "Dot Product", "Cross Product", "RSS", "RMS", "Campbell Diagram", "Max Envelope", "Min Envelope"];

function ContextMenus() {
  return (
    <Context>
      {contextItems.map((raw, i) => {
        if (raw === "-") return <Divider key={i} />;
        const text = raw.replace(">", "");
        const open = text === "Multiple Curves Math";
        return (
          <li key={i}>
            <Entry $open={open}>
              {text === "Delete" && (
                <Cross><Small w={16} h={16}><path d="M3 3 13 13M13 3 3 13" stroke="#b8202a" strokeWidth="6" /><path d="M3 3 13 13M13 3 3 13" stroke="#e8464c" strokeWidth="4" /></Small></Cross>
              )}
              <span>{text}</span>
              {text === "Delete" && <span>Del</span>}
              {raw !== text && <Arrow $light={open} />}
              {open && <Ring />}
            </Entry>
          </li>
        );
      })}
      <Sub>
        {subItems.map((t) => <li key={t}><Entry>{t}</Entry></li>)}
        <HandTick width="60" height="52" viewBox="0 0 60 52" fill="none" aria-hidden="true">
          <path d="M7 12Q14 20 18 29L32 43Q40 32 42 22L51 5" stroke="#fba76e" strokeWidth="8" strokeLinecap="round" strokeLinejoin="round" />
        </HandTick>
      </Sub>
    </Context>
  );
}

/* ---------- page ---------- */

const StatusStrip = styled.footer`
  display: flex;
  justify-content: flex-end;
  align-items: flex-end;
  height: 31px;
`;

export default function App() {
  return (
    <Page>
      <GlobalStyle />
      <MenuBar>
        <MenuNav>
          {["File", "Edit", "View", "HyperGraph", "Line Chart", "Report", "Safety"].map((t) => (
            <MenuButton key={t} $current={t === "Line Chart"}>{t}</MenuButton>
          ))}
          <IconButton aria-label="Add menu" $w={24}>
            <Small w={18} h={18}><path d="M6 1H12V6H17V12H12V17H6V12H1V6H6Z" stroke="#c9c9c9" strokeWidth="1.6" /></Small>
          </IconButton>
        </MenuNav>
        <PageTools>
          <IconButton aria-label="Chat" $w={38}>
            <Small w={26} h={26}><circle cx="13" cy="13" r="12.5" fill="#1290c4" /><path d="M9 17Q5 15 6 12Q8 8 13 8T20 12.5Q19 17 13 17L7 19Z" stroke="#9fe0f6" strokeWidth="1.6" /></Small>
          </IconButton>
          <IconButton aria-label="Search" $w={38}><SearchIcon /></IconButton>
          <PageName>Displacement (Grids)-1<Caret $dark /></PageName>
          <IconButton aria-label="Single window" $w={36}>
            <Small w={22} h={22}><rect x="2" y="1" width="18" height="19" rx="1" stroke="#888" strokeWidth="2" /></Small>
          </IconButton>
          <IconButton aria-label="Detach window" $w={36}>
            <Small w={22} h={22}><path d="M8 1H1V20H19V17M11 6A5 5 0 1 0 18 6M14 0V7M11 4 14 0 17 4" stroke="#888" strokeWidth="2" /></Small>
          </IconButton>
          <IconButton aria-label="Previous page" $w={34}><Small w={8} h={12}><path d="M7 0V12L1 6Z" fill="#888" /></Small></IconButton>
          <span>1 of 1</span>
          <IconButton aria-label="Next page" $w={28}><Small w={8} h={12}><path d="M1 0V12L7 6Z" fill="#888" /></Small></IconButton>
        </PageTools>
      </MenuBar>
      <Ribbon>
        {groups.map((g) => (
          <Group key={g.name}>
            <GroupTools>
              {g.tools.map(([name, Icon, dots]) => (
                <Tool key={name}>
                  <Icon />
                  <Dots>{Array.from({ length: dots }, (_, i) => <i key={i} />)}</Dots>
                  {name}
                </Tool>
              ))}
            </GroupTools>
            <GroupName>{g.name}</GroupName>
          </Group>
        ))}
      </Ribbon>
      <Main>
        <SidePanel />
        <Workspace />
      </Main>
      <StatusStrip>
        <Small w={14} h={14}><path d="M3 13 13 3M8 13 13 8" stroke="#a8a8a8" strokeWidth="1.5" /></Small>
      </StatusStrip>
      <ContextMenus />
    </Page>
  );
}
